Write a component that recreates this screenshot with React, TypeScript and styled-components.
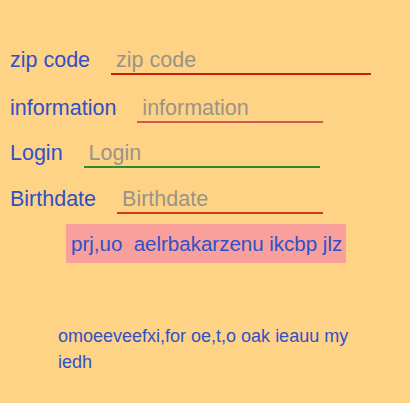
import React from 'react';
import styled, { createGlobalStyle } from 'styled-components';

const GlobalStyle = createGlobalStyle`
  html, body {
    margin: 0;
    padding: 0;
    background: #ffd386;
  }
`;

const Page = styled.div`
  display: flex;
  flex-direction: column;
  width: 410px;
  height: 403px;
  padding-top: 47px;
  box-sizing: border-box;
  font-family: 'Liberation Sans', Arial, sans-serif;
  color: #3050c8;
`;

const Row = styled.div<{ $gap: number }>`
  display: flex;
  align-items: baseline;
  padding-left: 10px;
  margin-bottom: ${(p) => p.$gap}px;
`;

const Label = styled.label`
  font-size: 21.5px;
  line-height: 26px;
  white-space: nowrap;
`;

const Field = styled.input<{ $width: number; $line: string }>`
  margin-left: 21px;
  width: ${(p) => p.$width}px;
  box-sizing: border-box;
  padding: 0 0 0 5px;
  border: none;
  border-bottom: 2px solid ${(p) => p.$line};
  background: transparent;
  outline: none;
  font-family: inherit;
  font-size: 21.5px;
  line-height: 26px;
  color: #3050c8;

  &::placeholder {
    color: #9a9488;
  }
`;

const Banner = styled.div`
  align-self: flex-start;
  margin-left: 66px;
  margin-top: 10px;
  width: 280px;
  height: 39px;
  box-sizing: border-box;
  padding-left: 5px;
  background: #f9a09c;
  font-size: 20.5px;
  line-height: 39px;
  white-space: pre;
`;

const Note = styled.p`
  margin: 60px 0 0 58px;
  width: 300px;
  font-size: 18px;
  line-height: 26px;
`;

const fields = [
  { name: 'zip code', width: 260, line: '#c8200e', gap: 20 },
  { name: 'information', width: 186, line: '#cd5a4a', gap: 17 },
  { name: 'Login', width: 236, line: '#2e8b2e', gap: 18 },
  { name: 'Birthdate', width: 206, line: '#d03a1c', gap: 0 },
];

export default function App() {
  return (
    <>
      <GlobalStyle />
      <Page>
        {fields.map((f) => (
          <Row key={f.name} $gap={f.gap}>
            <Label>{f.name}</Label>
            <Field placeholder={f.name} $width={f.width} $line={f.line} />
          </Row>
        ))}
        <Banner>{'prj,uo  aelrbakarzenu ikcbp jlz'}</Banner>
        <Note>omoeeveefxi,for oe,t,o oak ieauu my iedh</Note>
      </Page>
    </>
  );
}
